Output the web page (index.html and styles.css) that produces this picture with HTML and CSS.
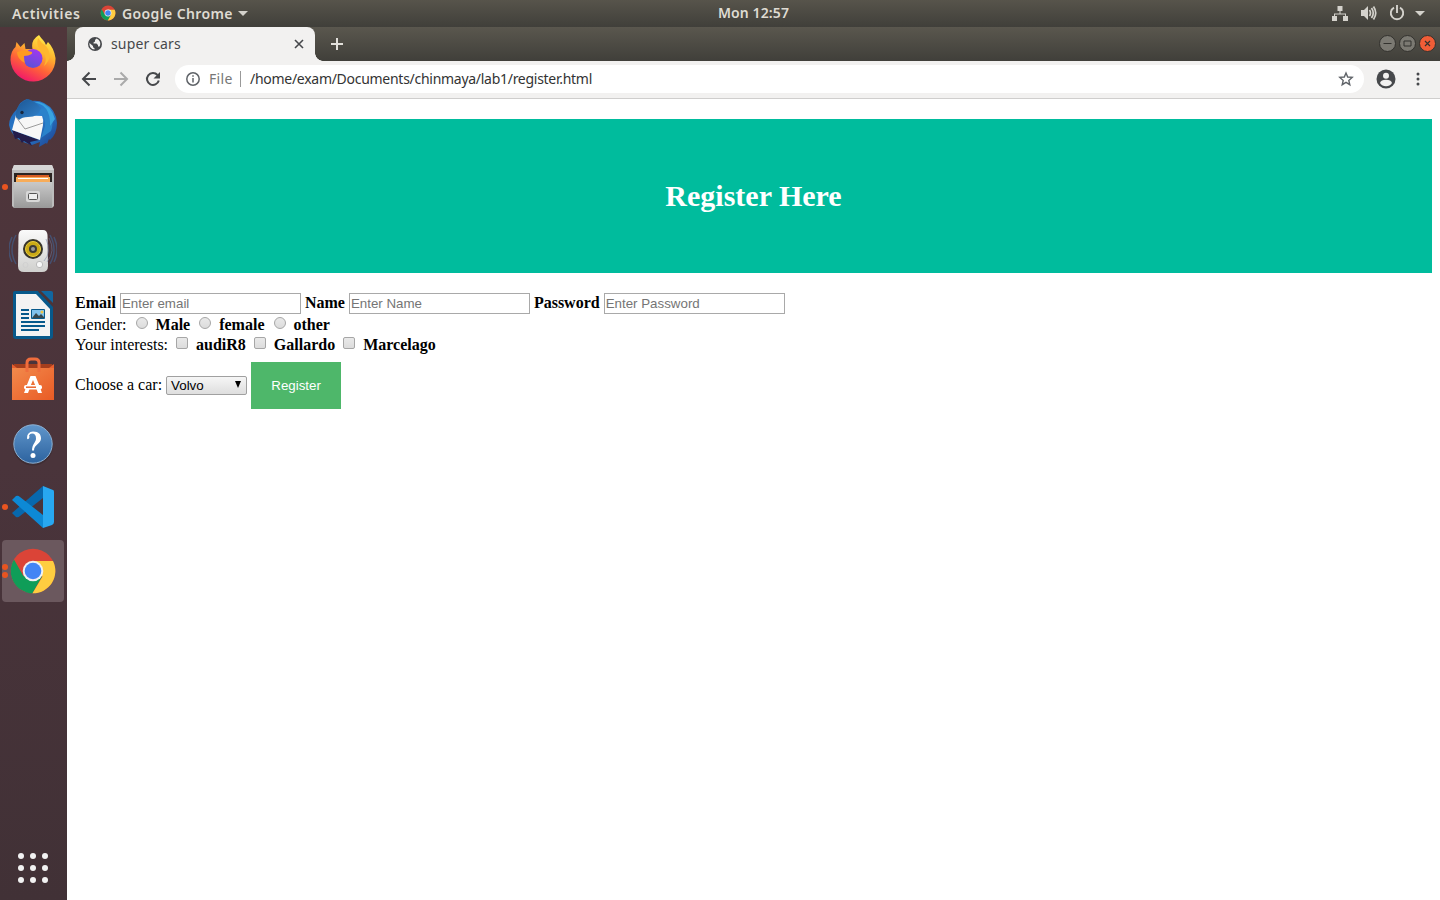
FILE: index.html
```html
<!DOCTYPE html>
<html lang="en">
<head>
<meta charset="utf-8">
<title>super cars</title>
<link rel="stylesheet" href="styles.css">
</head>
<body>
<svg class="defs" width="0" height="0">
  <defs>
    <linearGradient id="ffA" x1=".8" y1="0" x2=".3" y2="1"><stop offset="0" stop-color="#fff44f"/><stop offset=".35" stop-color="#ffb52e"/><stop offset=".65" stop-color="#ff6238"/><stop offset="1" stop-color="#f0146d"/></linearGradient>
    <linearGradient id="ffB" x1=".7" y1="0" x2=".3" y2="1"><stop offset="0" stop-color="#a237f0"/><stop offset="1" stop-color="#5a53d6"/></linearGradient>
    <linearGradient id="tb" x1="0" y1="0" x2="1" y2="1"><stop offset="0" stop-color="#1f5fb0"/><stop offset=".5" stop-color="#2b80cf"/><stop offset="1" stop-color="#1b3f8e"/></linearGradient>
    <linearGradient id="tbHead" x1="0" y1="0" x2="1" y2="1"><stop offset="0" stop-color="#1c5592"/><stop offset="1" stop-color="#3283cd"/></linearGradient>
    <linearGradient id="metal" x1="0" y1="0" x2="0" y2="1"><stop offset="0" stop-color="#c9c9c9"/><stop offset="1" stop-color="#999"/></linearGradient>
    <linearGradient id="white" x1="0" y1="0" x2="0" y2="1"><stop offset="0" stop-color="#fafafa"/><stop offset="1" stop-color="#d0d0ce"/></linearGradient>
    <linearGradient id="bag" x1="0" y1="0" x2="1" y2="1"><stop offset="0" stop-color="#f28a4c"/><stop offset="1" stop-color="#e95b25"/></linearGradient>
    <linearGradient id="help" x1="0" y1="0" x2="0" y2="1"><stop offset="0" stop-color="#6096cb"/><stop offset="1" stop-color="#2d639f"/></linearGradient>
    <symbol id="chrome" viewBox="0 0 48 48">
      <circle cx="24" cy="24" r="22.300" fill="#db4437"/>
      <path fill="#0f9d58" d="M5 12.400A22.300 22.300 0 0 0 23.500 46.300L33 29.500 24 24 14.500 29.200z"/>
      <path fill="#ffcd40" d="M23.500 46.300A22.300 22.300 0 0 0 44 14H24v10l9.500 5.500z"/>
      <circle cx="24" cy="24" r="10.300" fill="#f1f1f1"/>
      <circle cx="24" cy="24" r="8.300" fill="#4285f4"/>
    </symbol>
  </defs>
</svg>

<header class="panel">
  <div class="panel-left">
    <span class="activities">Activities</span>
    <svg class="app-icon" width="16" height="16"><use href="#chrome"/></svg>
    <span class="app-name">Google Chrome</span>
    <i class="caret"></i>
  </div>
  <span class="clock">Mon 12:57</span>
  <div class="panel-right">
    <svg width="16" height="16" viewBox="0 0 16 16" fill="#d4d2cc"><path d="M5.500 1h5v5h-2v2.500H14V11h2v5h-5v-5h2V9.500H3V11h2v5H0v-5h2V8.500h5.500V6h-2z"/></svg>
    <svg width="17" height="16" viewBox="0 0 17 16" fill="none" stroke="#d4d2cc" stroke-width="1.700"><path fill="#d4d2cc" stroke="none" d="M1 5h3l4-4v14l-4-4H1z"/><path d="M9.500 5q2 3 0 6M11.500 3q3.500 5 0 10M13.500 1.500q4.500 6.500 0 13"/></svg>
    <svg width="16" height="16" viewBox="0 0 16 16" fill="none" stroke="#d4d2cc" stroke-width="1.900"><path d="M5 2.600a6.200 6.200 0 1 0 6 0M8 0v8"/></svg>
    <i class="caret"></i>
  </div>
</header>

<div class="desktop">
  <nav class="dock">
    <div class="item">
      <svg class="up" width="48" height="48" viewBox="0 0 48 48"><path fill="url(#ffA)" d="M30 1q2 3 4 5 2 2 3 5l2-3q6 6 7.500 16a22.500 22.500 0 0 1-45 2q0-9 5-13l1-5 4 5 4-4 1 6h7q-2-9 6.500-14z"/><path fill="#ffb72f" d="M29 4q-3 9 5 14 5 6 1 14 10-9 2-20-5-3-8-8z"/><circle cx="24" cy="24.500" r="9.500" fill="url(#ffB)"/><path fill="#ff9a22" d="M8 18q7-3 15 0 1.500 3-8 4 0 4 1 7-8-4-8-11z"/></svg>
    </div>
    <div class="item">
      <svg width="50" height="50" viewBox="0 0 50 50"><path fill="url(#tb)" d="M9 11q3-8 10-10l4 2q8-1 13 2 12 6 13 20 0 11-7 17l-1-1-2 5-1-1-7 4 1-5-8 3Q4 42 1 27q0-8 8-16z"/><path fill="#241d4a" d="m4 32 3 9 4-1 3 5 2-2 8 5-2-4 9-2z"/><path fill="#f7f7f7" d="m8 17 26 1q2 4 1 9l-3 15L4 32z"/><path d="m8 19 9 12 18-6" fill="none" stroke="#9b9b9b"/><path fill="#2a82cb" d="M27 13q11 2 10 15l-4 12 10-7q5-14-6-23z"/><path fill="#39a3df" d="M23 4q20 1 19 24l5-7Q43 7 31 4z"/><path fill="url(#tbHead)" d="M8 19q-1-13 12-18 7 2 13 9-2 9-13 9-6 0-9 3z"/><circle cx="14" cy="14.500" r="1.700" fill="#18283e"/></svg>
    </div>
    <div class="item">
      <i class="dot"></i>
      <svg width="48" height="48" viewBox="0 0 48 48"><path fill="#bcbcbc" d="M5 2h38l2 5v36l-2 2H5l-2-2V7z"/><path fill="#d6d6d6" d="M5 2h38l2 5H3z"/><path fill="#2b2422" d="M5 10h38v9H5z"/><path fill="#d65c24" d="M8 12h32v7H8z"/><path fill="#f7ac59" d="M7 14h34v5H7z"/><path stroke="#fff" d="M9 15.500h30"/><path fill="url(#metal)" d="M5 19h38v26H5z"/><rect x="17" y="28" width="14" height="11" rx="2" fill="#d8d8d8"/><rect x="19.500" y="30.500" width="9" height="6" rx="1" fill="#eee" stroke="#555"/></svg>
    </div>
    <div class="item">
      <svg width="48" height="48" viewBox="0 0 48 48"><g fill="none" stroke="#46506f" stroke-width="1.500"><path d="M7 8q-8 15 0 29M3 10q-6 13 0 25M41 8q8 15 0 29M45 10q6 13 0 25"/></g><path fill="url(#white)" d="M14 3h20q4 0 4.500 5L39 39q0 6-6 6H15q-6 0-6-6l.5-31q.5-5 4.500-5z"/><circle cx="24" cy="22" r="10" fill="#38352b"/><circle cx="24" cy="22" r="7.500" fill="#c9a916" stroke="#e9cc39"/><circle cx="24" cy="22" r="4" fill="#3c3a36"/><circle cx="24" cy="22" r="2" fill="#999"/><rect x="27.500" y="34.500" width="6" height="6" rx="2.500" fill="#f8f8f8" stroke="#bbb"/><circle cx="16.500" cy="38" r="2.500" fill="none" stroke="#d0d0d0"/><path d="M37 12q6 13-2 22M40 11q7 13-2 24" fill="none" stroke="#7182aa" opacity=".5"/></svg>
    </div>
    <div class="item">
      <svg width="48" height="48" viewBox="0 0 48 48"><path fill="#07598b" d="M6 0h23l15 16v29q0 3-3 3H7q-3 0-3-3V2q0-2 2-2z"/><path fill="#1167a0" d="M32 0h10q2 0 2 2v10z"/><path fill="#f3f3f3" d="M7 3h20l14 15v27H7z"/><path d="m30 0 14.500 14.500" stroke="#4c3438" stroke-width="2"/><g stroke="#07598b" stroke-width="2"><path d="M12 19h8M12 23h8M12 27h8M12 31h24M12 35h24M12 39h18"/></g><path fill="#80c2ed" stroke="#07598b" d="M22.500 18.500h13v9h-13z"/><path fill="#36474d" d="m23 27 4-5 3 3 2-2 3 3v1z"/><circle cx="33" cy="21" r="1.500" fill="#f1c444"/></svg>
    </div>
    <div class="item">
      <svg class="down" width="48" height="48" viewBox="0 0 48 48"><path fill="#a43e1d" d="M5 8h38l2 5H3z"/><path fill="#e95f2e" d="m3 8 5 4H3zm42 0-5 4h5z"/><path fill="url(#bag)" d="M3 12h42v32H3z"/><path fill="none" stroke="#ef6d3d" stroke-width="3" d="M18 16V7q0-4 4-4h4q4 0 4 4v9"/><path fill="#fff" d="M21.500 20h5l4 10h-4L24 24l-2.500 6h-4zM16.500 33h4l-1.500 4h-4zM27.500 33h4l1.500 4h-4z"/><rect x="15" y="29" width="18" height="4.500" rx="2" fill="#fff"/><path stroke="#e9642c" stroke-width="1.500" d="M17 31.200h10"/></svg>
    </div>
    <div class="item">
      <svg class="down" width="48" height="48" viewBox="0 0 48 48"><circle cx="24" cy="25.500" r="20" fill="#3f2d33"/><circle cx="24" cy="24" r="19.200" fill="url(#help)" stroke="#8eb1d2"/><path d="M18 18q0-6 6-6.500c6 0 8 3 8 7 0 5-7 6-7 12h-2c0-7 4-8 4-12q0-5-4-5-2 0-3 2 1 1 0 3-2 1.500-2-.5z" fill="#fff"/><circle cx="24" cy="35.500" r="2.500" fill="#fff"/></svg>
    </div>
    <div class="item">
      <i class="dot"></i>
      <svg width="48" height="48" viewBox="0 0 48 48"><path fill="#0868ad" d="m3 30 4 4q2 1 4-1L34 15V3z"/><path fill="#0d89d5" d="m3 17 4-4q2-1 4 1l23 18v13z"/><path fill="#28a8f1" d="m34 3 10 4q1 0 1 2v30q0 2-2 3l-9 3V3z"/></svg>
    </div>
    <div class="item active">
      <i class="dot two"></i>
      <svg width="48" height="48"><use href="#chrome"/></svg>
    </div>
    <div class="apps"><i></i><i></i><i></i><i></i><i></i><i></i><i></i><i></i><i></i></div>
  </nav>

  <main class="window">
    <div class="tabstrip">
      <div class="tab">
        <svg width="14" height="14" viewBox="0 0 14 14"><circle cx="7" cy="7" r="7" fill="#46484b"/><path fill="#f2f1f0" d="M8.500 1.500 7 3v1.500L5.500 5.500v1h3L10 8v1.500h1.500A5.500 5.500 0 0 0 8.500 1.500zM1.500 6l3.500 3v1.200l1.500 1v1.400A5.600 5.600 0 0 1 1.500 6z"/></svg>
        <span>super cars</span>
        <svg class="close" width="10" height="10" viewBox="0 0 10 10" stroke="#46484b" stroke-width="1.600"><path d="m1 1 8 8M9 1 1 9"/></svg>
      </div>
      <svg class="plus" width="12" height="12" stroke="#e2e0db" stroke-width="2"><path d="M0 6h12M6 0v12"/></svg>
      <div class="controls">
        <svg width="17" height="17"><circle cx="8.500" cy="8.500" r="8" fill="#7b7972" stroke="#33322e"/><path d="M4.500 8.500h8" stroke="#33322e"/></svg>
        <svg width="17" height="17"><circle cx="8.500" cy="8.500" r="8" fill="#7b7972" stroke="#33322e"/><path d="M5 6h7v5H5z" fill="none" stroke="#33322e"/></svg>
        <svg width="17" height="17"><circle cx="8.500" cy="8.500" r="8" fill="#f05d37" stroke="#33322e"/><path d="m6 6 5 5m0-5-5 5" stroke="#33322e" stroke-width="1.200"/></svg>
      </div>
    </div>
    <div class="toolbar">
      <svg width="16" height="16" viewBox="0 0 16 16" fill="none" stroke="#46484b" stroke-width="2"><path d="M15 8H2M8.500 1.500 2 8l6.500 6.500"/></svg>
      <svg width="16" height="16" viewBox="0 0 16 16" fill="none" stroke="#aaa" stroke-width="2"><path d="M1 8h13M7.500 1.500 14 8l-6.500 6.500"/></svg>
      <svg width="16" height="16" viewBox="0 0 16 16" fill="none" stroke="#46484b" stroke-width="2"><path d="M13.800 9.500A6 6 0 1 1 12.500 4"/><path fill="#46484b" stroke="none" d="M15 1v6.500H8.500z"/></svg>
      <div class="address">
        <svg width="14" height="14" fill="none" stroke="#5f6368" stroke-width="1.500"><circle cx="7" cy="7" r="6.200"/><path d="M7 6v4.500M7 3.300v1.500"/></svg>
        <span class="scheme">File</span>
        <span class="path">/home/exam/Documents/chinmaya/lab1/register.html</span>
        <svg class="star" width="16" height="16" viewBox="0 0 16 16" fill="none" stroke="#5f6368" stroke-width="1.400"><path d="m8 2 1.700 4 4.500.4-3.400 3 1 4.300L8 11.400l-3.800 2.300 1-4.300-3.400-3L6.300 6z"/></svg>
      </div>
      <svg class="user" width="20" height="20"><circle cx="10" cy="10" r="9.500" fill="#46484b"/><circle cx="10" cy="6.700" r="3" fill="#f2f1f0"/><path fill="#f2f1f0" d="M4 14q1-3.200 6-3.200t6 3.200q-2.200 3.200-6 3.200T4 14z"/></svg>
      <svg class="more" width="4" height="14" fill="#46484b"><circle cx="2" cy="2" r="1.500"/><circle cx="2" cy="7" r="1.500"/><circle cx="2" cy="12" r="1.500"/></svg>
    </div>
    <div class="page">
      <h1>Register Here</h1>
      <form>
        <div class="row fields"><b>Email</b> <input class="text" placeholder="Enter email"> <b>Name</b> <input class="text" placeholder="Enter Name"> <b>Password</b> <input class="text" placeholder="Enter Password"></div>
        <div class="row">Gender: <input class="radio" type="radio"> <b>Male</b> <input class="radio" type="radio"> <b>female</b> <input class="radio" type="radio"> <b>other</b></div>
        <div class="row">Your interests: <input class="check" type="checkbox"> <b>audiR8</b> <input class="check" type="checkbox"> <b>Gallardo</b> <input class="check" type="checkbox"> <b>Marcelago</b></div>
        <div class="row last">Choose a car: <span class="select"><span>Volvo</span><svg width="6" height="7"><path d="M0 0h6L3 7z"/></svg></span> <button type="button">Register</button></div>
      </form>
    </div>
  </main>
</div>
</body>
</html>
```
FILE: styles.css
```css
* { box-sizing: border-box; }
body { margin: 0; width: 1440px; height: 900px; overflow: hidden; display: flex; flex-direction: column; background: #fff; }
svg { flex: none; display: block; }
.defs { position: absolute; }

.panel { height: 27px; flex: none; display: grid; grid-template-columns: 706px 73px 1fr; align-items: center; padding: 0 15px 0 12px; background: linear-gradient(#57544b, #403f3a); color: #dfdbd2; font: 600 14px/26px "Noto Sans", sans-serif; white-space: nowrap; }
.panel-left, .panel-right { display: flex; align-items: center; }
.activities { width: 68px; letter-spacing: .6px; }
.app-icon { margin: -2px 6px 0 20px; }
.app-name { width: 111px; letter-spacing: .38px; }
.caret { border: 5px solid transparent; border-top-color: #d4d2cc; border-bottom: 0; margin-left: 5px; }
.clock { letter-spacing: .1px; line-height: 24px; margin-top: -2px; }
.panel-right { justify-content: flex-end; gap: 12px; margin-top: -1px; }
.panel-right .caret { margin-left: -2px; }

.desktop { display: flex; flex: 1; min-height: 0; }
.dock { width: 67px; flex: none; display: flex; flex-direction: column; background: linear-gradient(#50363b, #4a343b 50%, #413136); }
.item { position: relative; height: 64px; flex: none; display: flex; align-items: center; justify-content: center; padding-right: 1px; }
.item .up { margin-bottom: 2px; }
.item .down { margin-top: 2px; }
.item.active { width: 62px; height: 62px; margin: 1px 0 0 2px; padding: 0; border-radius: 4px; background: #6b585e; }
.dot { position: absolute; left: 2px; top: 29px; width: 6px; height: 6px; border-radius: 50%; background: #e95420; }
.dot.two { left: 0; top: 24px; box-shadow: 0 8px #e95420; }
.apps { margin: auto 0 17px 18px; display: grid; grid-template-columns: repeat(3, 6px); gap: 6px; }
.apps i { width: 6px; height: 6px; border-radius: 50%; background: #f2f2f2; }

.window { flex: 1; min-width: 0; font-family: "Noto Sans", sans-serif; }
.tabstrip { height: 34px; display: flex; align-items: center; padding: 0 4px 0 8px; background: linear-gradient(#5a574e, #403f3a); }
.tab { position: relative; width: 240px; height: 34px; display: flex; align-items: center; padding: 0 11px 0 13px; background: #f2f1f0; border-radius: 8px 8px 0 0; color: #46484b; font-size: 14px; }
.tab::before, .tab::after { content: ""; position: absolute; bottom: 0; width: 8px; height: 8px; }
.tab::before { left: -8px; background: radial-gradient(circle at 0 0, transparent 7.5px, #f2f1f0 8px); }
.tab::after { right: -8px; background: radial-gradient(circle at 100% 0, transparent 7.5px, #f2f1f0 8px); }
.tab span { margin: -2px 0 0 9px; letter-spacing: .15px; }
.close { margin-left: auto; }
.plus { margin-left: 16px; }
.controls { display: flex; gap: 3px; margin: -1px 0 0 auto; }

.toolbar { height: 38px; display: flex; align-items: center; padding: 0 20px 2px 14px; background: #f2f1f0; border-bottom: 1px solid #cfcecd; gap: 16px; }
.address { width: 1189px; height: 28px; margin-left: -2px; display: flex; align-items: center; padding: 0 10px 0 11px; border-radius: 14px; background: #fff; font-size: 14px; line-height: 28px; white-space: nowrap; }
.scheme { width: 32px; margin-left: 9px; padding-right: 7px; line-height: 16px; color: #777; border-right: 1px solid #999; letter-spacing: .3px; }
.path { margin-left: 9px; color: #333; letter-spacing: -.28px; }
.star { margin-left: auto; }
.user { margin-left: -4px; }
.more { margin-left: 4px; }

.page { padding: 20px 8px; font: 16px "Liberation Serif", serif; color: #000; }
h1 { margin: 0 0 20px; height: 154px; background: #00bc9d; color: #fff; text-align: center; font-size: 30px; line-height: 154px; }
form { margin: 0; }
.row { height: 20px; line-height: 20px; white-space: nowrap; }
.row.fields { height: 22px; }
.row.last { height: 47px; margin-top: 7px; line-height: 46px; }
.text { width: 181px; height: 21px; margin: 0; padding: 1px; vertical-align: top; border: 1px solid #a9a9a9; background: #fff; font: 13.333px "Liberation Sans", sans-serif; }
.text::placeholder { color: #757575; }
.radio, .check { appearance: none; width: 12px; height: 12px; vertical-align: top; border: 1px solid #a6a6a6; background: linear-gradient(#e9e9e9, #dcdcdc); }
.radio { margin: 2px 4px 0 5px; border-radius: 50%; }
.check { margin: 2px 4px 0; border-radius: 2px; }
.select { display: inline-flex; width: 81px; height: 19px; margin-top: 14px; vertical-align: top; align-items: center; justify-content: space-between; padding: 0 5px 0 4px; border: 1px solid #a0a0a0; border-radius: 2px; background: linear-gradient(#f6f6f6, #dedede); font: 13.333px "Liberation Sans", sans-serif; }
.select svg { margin-top: -2px; }
button { width: 90px; height: 47px; padding: 0; vertical-align: top; border: 0; background: #4eb76a; color: #fff; font: 13.333px "Liberation Sans", sans-serif; }
```
